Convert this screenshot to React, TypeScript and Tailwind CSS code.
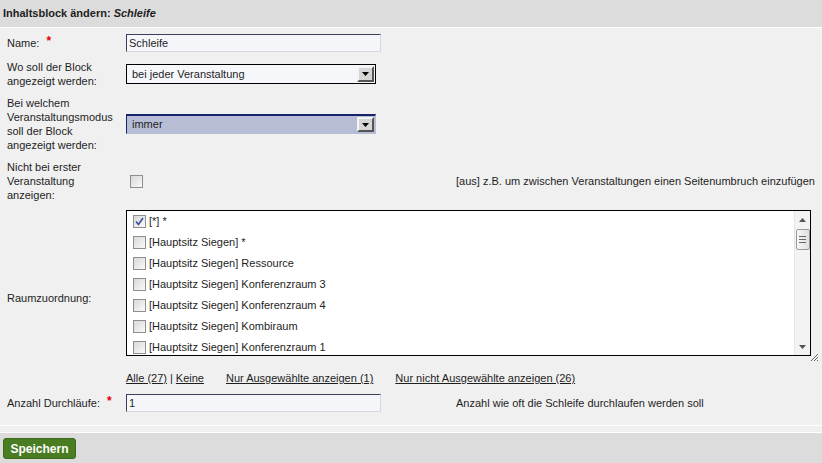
import { ReactNode } from 'react';

const raeume = [
  '[*] *',
  '[Hauptsitz Siegen] *',
  '[Hauptsitz Siegen] Ressource',
  '[Hauptsitz Siegen] Konferenzraum 3',
  '[Hauptsitz Siegen] Konferenzraum 4',
  '[Hauptsitz Siegen] Kombiraum',
  '[Hauptsitz Siegen] Konferenzraum 1',
];

function Pflicht() {
  return <span className="text-[#e00000] text-[12px] font-bold ml-[7px] relative -top-[2px]">*</span>;
}

function Checkbox({ checked = false }: { checked?: boolean }) {
  return (
    <span className="w-[13px] h-[13px] shrink-0 border border-[#8e8e8e] bg-linear-to-br from-[#d8d8d8] to-[#fafafa] flex items-center justify-center">
      {checked && (
        <svg width="9" height="9" viewBox="0 0 9 9">
          <path d="M1 4.5 L3.5 7.5 L8 1" fill="none" stroke="#3b4f9e" strokeWidth="1.6" />
        </svg>
      )}
    </span>
  );
}

function DropButton() {
  return (
    <span className="absolute right-[1px] top-[1px] bottom-[1px] w-[17px] bg-[#d6d6d6] border-2 border-t-[#f4f4f4] border-l-[#f4f4f4] border-r-[#555] border-b-[#555] flex items-center justify-center">
      <svg width="7" height="4" viewBox="0 0 7 4">
        <path d="M0 0 H7 L3.5 4 Z" fill="#000" />
      </svg>
    </span>
  );
}

function Select({ value, active = false }: { value: string; active?: boolean }) {
  return (
    <div
      className={
        'relative w-[250px] h-[20px] flex items-center pl-[5px] ' +
        (active
          ? 'bg-[#b8bdd6] border-t-2 border-l border-[#17246b] border-b border-b-[#b8bdd6] border-r border-r-[#b8bdd6]'
          : 'bg-[#f6f7fb] border border-black')
      }
    >
      {value}
      <DropButton />
    </div>
  );
}

function Label({ children }: { children: ReactNode }) {
  return <div className="leading-[14px] pr-2">{children}</div>;
}

export default function App() {
  return (
    <div
      className="w-[822px] h-[463px] bg-[#f0f0f0] text-[11px] text-[#1e1e1e] overflow-hidden"
      style={{ fontFamily: '"Liberation Sans", Arial, sans-serif' }}
    >
      {/* Kopfzeile */}
      <div className="h-[28px] bg-[#dcdcdc] border-b border-white flex items-center pl-[3px] font-bold">
        Inhaltsblock ändern:&nbsp;<i>Schleife</i>
      </div>

      {/* Formular */}
      <div className="pt-[6px] pb-[13px] border-b border-white">
        <div className="grid grid-cols-[119px_330px_1fr] items-center gap-y-2 pl-[7px]">
          <Label>
            Name:<Pflicht />
          </Label>
          <div className="col-span-2">
            <input
              defaultValue="Schleife"
              className="w-[255px] h-[18px] bg-[#f5f6fa] border border-t-[#3e3e5a] border-l-[#3e3e5a] border-r-[#d5d8e2] border-b-[#d5d8e2] px-[2px] outline-none"
            />
          </div>

          <Label>
            Wo soll der Block
            <br />
            angezeigt werden:
          </Label>
          <div className="col-span-2">
            <Select value="bei jeder Veranstaltung" />
          </div>

          <Label>
            Bei welchem
            <br />
            Veranstaltungsmodus
            <br />
            soll der Block
            <br />
            angezeigt werden:
          </Label>
          <div className="col-span-2">
            <Select value="immer" active />
          </div>

          <Label>
            Nicht bei erster
            <br />
            Veranstaltung
            <br />
            anzeigen:
          </Label>
          <div className="pl-[4px]">
            <Checkbox />
          </div>
          <div className="whitespace-nowrap">[aus] z.B. um zwischen Veranstaltungen einen Seitenumbruch einzufügen</div>

          <Label>Raumzuordnung:</Label>
          <div className="col-span-2">
            <div className="relative w-[685px] h-[146px] border border-black bg-white flex">
              <div className="flex-1 overflow-hidden">
                {raeume.map((r, i) => (
                  <div key={i} className="h-[21px] flex items-center gap-[3px] pl-[6px]">
                    <Checkbox checked={i === 0} />
                    <span>{r}</span>
                  </div>
                ))}
              </div>
              {/* Scrollleiste */}
              <div className="w-[16px] bg-[#f3f3f3] border-l border-[#e6e6e6] flex flex-col items-center">
                <svg width="7" height="4" viewBox="0 0 7 4" className="mt-[7px]">
                  <path d="M0 4 H7 L3.5 0 Z" fill="#555" />
                </svg>
                <div className="mt-[7px] w-[14px] h-[21px] rounded-[2px] border border-[#9a9a9a] bg-linear-to-r from-[#f8f8f8] to-[#dedede] flex flex-col items-center justify-center gap-[2px]">
                  <span className="w-[7px] h-px bg-[#666]" />
                  <span className="w-[7px] h-px bg-[#666]" />
                  <span className="w-[7px] h-px bg-[#666]" />
                </div>
                <div className="flex-1" />
                <svg width="7" height="4" viewBox="0 0 7 4" className="mb-[6px]">
                  <path d="M0 0 H7 L3.5 4 Z" fill="#555" />
                </svg>
              </div>
              {/* Größe ändern */}
              <svg width="7" height="7" viewBox="0 0 7 7" className="absolute -right-[8px] -bottom-[6px]">
                <path d="M7 0 L0 7 M7 3 L3 7 M7 6 L6 7" stroke="#666" strokeWidth="1" />
              </svg>
            </div>
            <div className="mt-[14px] leading-[16px] flex whitespace-nowrap">
              <span className="underline">Alle (27)</span>
              <span className="mx-[3px]">|</span>
              <span className="underline">Keine</span>
              <span className="underline ml-[22px]">Nur Ausgewählte anzeigen (1)</span>
              <span className="underline ml-[22px]">Nur nicht Ausgewählte anzeigen (26)</span>
            </div>
          </div>

          <Label>
            Anzahl Durchläufe:<Pflicht />
          </Label>
          <div>
            <input
              defaultValue="1"
              className="w-[255px] h-[18px] bg-[#f5f6fa] border border-t-[#3e3e5a] border-l-[#3e3e5a] border-r-[#d5d8e2] border-b-[#d5d8e2] px-[2px] outline-none"
            />
          </div>
          <div>Anzahl wie oft die Schleife durchlaufen werden soll</div>
        </div>
      </div>

      {/* Fußzeile */}
      <div className="h-[6px]" />
      <div className="h-[31px] bg-[#dcdcdc] border-t border-white pl-[3px] pt-[5px]">
        <button className="h-[21px] w-[73px] rounded-[3px] bg-[#4a7c22] border border-[#3d6a1a] text-white font-bold text-[12px]">
          Speichern
        </button>
      </div>
    </div>
  );
}
